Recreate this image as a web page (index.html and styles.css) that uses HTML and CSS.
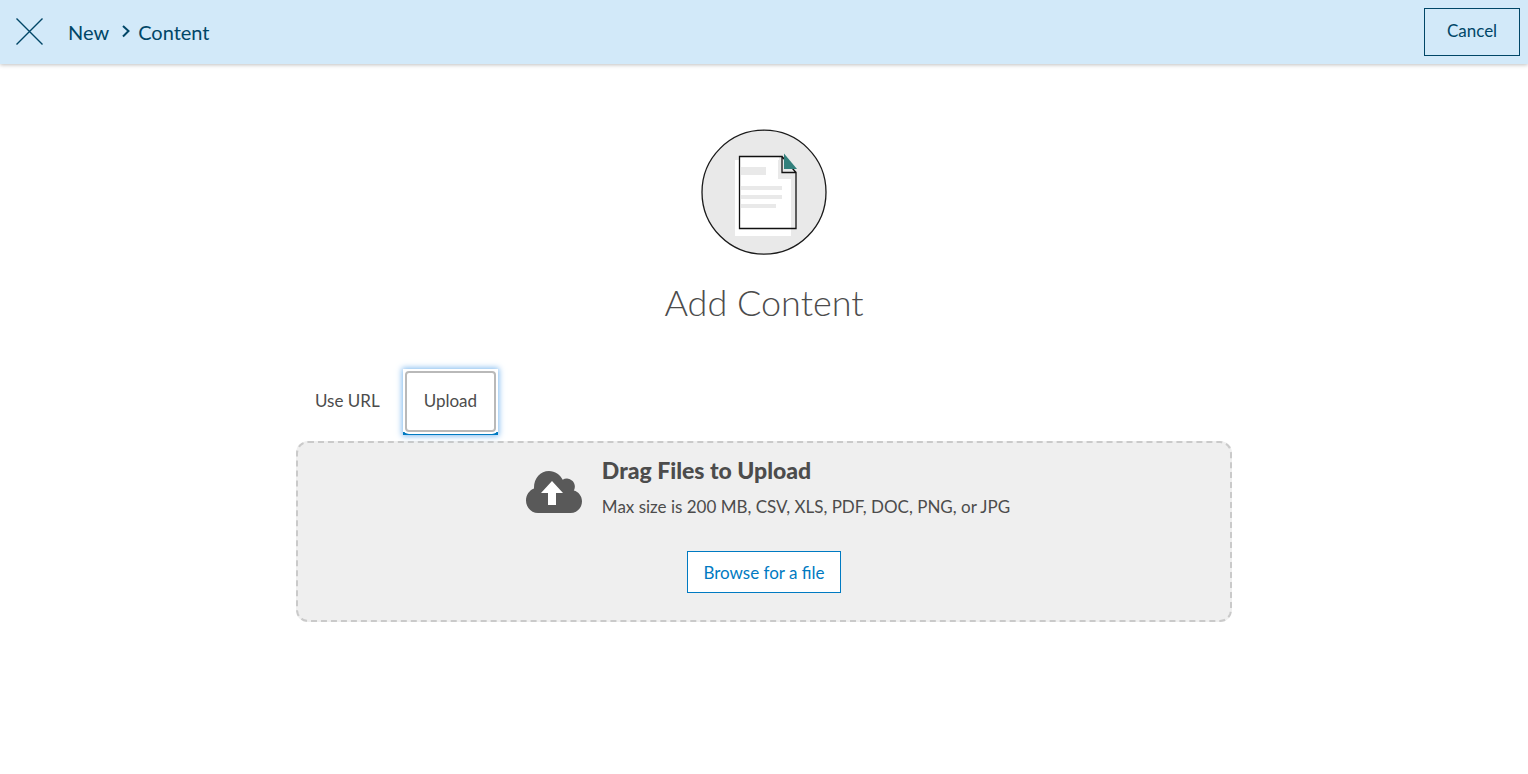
FILE: index.html
```html
<!DOCTYPE html>
<html lang="en">
<head>
  <meta charset="UTF-8">
  <meta name="viewport" content="width=device-width, initial-scale=1">
  <title>Add Content</title>
  <link rel="stylesheet" href="styles.css">
</head>
<body>
  <header class="topbar">
    <button type="button" class="close" aria-label="Close">
      <svg width="28" height="28" viewBox="0 0 28 28" fill="none" stroke="currentColor" stroke-width="1.4">
        <path d="M.5.5l26 26M26.500.5L.5 26.500"/>
      </svg>
    </button>
    <nav class="breadcrumb">
      <a href="#new">New</a>
      <svg class="chevron" width="8" height="14" viewBox="0 0 8 14" fill="none" stroke="currentColor" stroke-width="2">
        <path d="M1 1l5.500 5L1 11.500"/>
      </svg>
      <a href="#content">Content</a>
    </nav>
    <button type="button" class="cancel">Cancel</button>
  </header>

  <main class="page">
    <svg class="hero" width="128" height="128" viewBox="0 0 128 128">
      <circle cx="64" cy="64.200" r="62" fill="#e9e9e9" stroke="#1a1a1a" stroke-width="1.300"/>
      <path fill="#fff" d="M35 32h43v19h13v57H35z"/>
      <path fill="#fff" d="M39 28h40v4H39z"/>
      <path fill="#e9e9e9" d="M41 39h25v8H41zM41 58h41v4H41zM41 67h41v4H41zM41 76h35v4H41z"/>
      <path fill="none" stroke="#111" stroke-width="1.300" d="M39.500 28.500h42.500v16h14v56h-56.500zM82 28.500l14 16"/>
      <path fill="#32807c" d="M84 25.500l13 15.500H84z"/>
    </svg>
    <h1>Add Content</h1>

    <section class="uploader">
      <div class="tabs" role="tablist">
        <button type="button" class="tab" role="tab" aria-selected="false">Use URL</button>
        <button type="button" class="tab active" role="tab" aria-selected="true"><span>Upload</span></button>
      </div>

      <div class="dropzone">
        <div class="drop-info">
          <svg width="56" height="42" viewBox="0 0 56 42">
            <path fill="#595959" d="M12 42C5.400 42 0 36.500 0 29.500 0 24 3.300 19.300 8 17.500 7.600 7.500 14.200 0 23 0c6 0 11.200 3.500 13.700 8.800C38.300 7.800 40 7.400 42 7.700c4.500.6 7.600 4.800 6.700 9.200-.1.900-.4 1.700-.9 2.500C52.600 20.700 56 25 56 30.200 56 36.800 51 42 44.500 42z"/>
            <path fill="#fff" d="M26 10l11 12h-7v12h-8V22h-7z"/>
          </svg>
          <div>
            <h2>Drag Files to Upload</h2>
            <p>Max size is 200 MB, CSV, XLS, PDF, DOC, PNG, or JPG</p>
          </div>
        </div>
        <button type="button" class="browse">Browse for a file</button>
      </div>
    </section>
  </main>
</body>
</html>
```

FILE: styles.css
```css
* {
  box-sizing: border-box;
}

body {
  margin: 0;
  background: #fff;
  color: #4c4c4c;
  font-family: Lato, "Noto Sans", sans-serif;
  font-size: 17px;
}

button {
  font: inherit;
  color: inherit;
  background: none;
  border: none;
  padding: 0;
  cursor: pointer;
}

svg {
  display: block;
  flex: none;
}

h1, h2, p {
  margin: 0;
}

.topbar {
  display: flex;
  align-items: center;
  height: 64px;
  padding: 0 8px 0 16px;
  background: #d2e9f9;
  color: #004667;
  box-shadow: 0 1px 4px rgba(0, 0, 0, 0.25);
}

.breadcrumb {
  display: flex;
  align-items: center;
  margin-left: 24px;
  font-size: 20px;
  line-height: 24px;
}

.breadcrumb a {
  color: inherit;
  text-decoration: none;
}

.chevron {
  margin: 0 8px 0 13px;
}

.cancel {
  width: 96px;
  height: 48px;
  margin-left: auto;
  padding-bottom: 4px;
  border: 1px solid #004667;
}

.page {
  display: flex;
  flex-direction: column;
  align-items: center;
  padding: 64px 24px;
}

h1 {
  margin-top: 24px;
  font-size: 36px;
  font-weight: 300;
  line-height: 44px;
}

.uploader {
  width: 100%;
  max-width: 936px;
  margin-top: 45px;
}

.tabs {
  display: flex;
  gap: 4px;
  margin-bottom: 6px;
}

.tab {
  height: 66px;
  padding: 0 19px 4px;
}

.active {
  padding: 2px;
  border-bottom: 3px solid #007ac2;
  box-shadow: 0 0 6px 1px #7db8ee;
  background: #fff;
}

.active span {
  display: flex;
  align-items: center;
  height: 61px;
  padding: 0 17px 3px;
  border: 2px solid #b9b9b9;
  border-radius: 4px;
  background: #fff;
  box-shadow: 0 0 0 2px #fff;
}

.dropzone {
  display: flex;
  flex-direction: column;
  align-items: center;
  padding: 11px 24px 27px;
  background: #efefef;
  border: 2px dashed #cacaca;
  border-radius: 12px;
}

.drop-info {
  display: flex;
  align-items: center;
  gap: 20px;
  padding-left: 8px;
}

.drop-info svg {
  margin-top: 11px;
}

h2 {
  font-size: 23px;
  font-weight: 900;
  line-height: 32px;
}

.drop-info p {
  margin-top: 9px;
  line-height: 24px;
}

.browse {
  height: 42px;
  margin-top: 32px;
  padding: 0 15px;
  color: #007ac2;
  background: #fff;
  border: 1px solid #007ac2;
}
```
